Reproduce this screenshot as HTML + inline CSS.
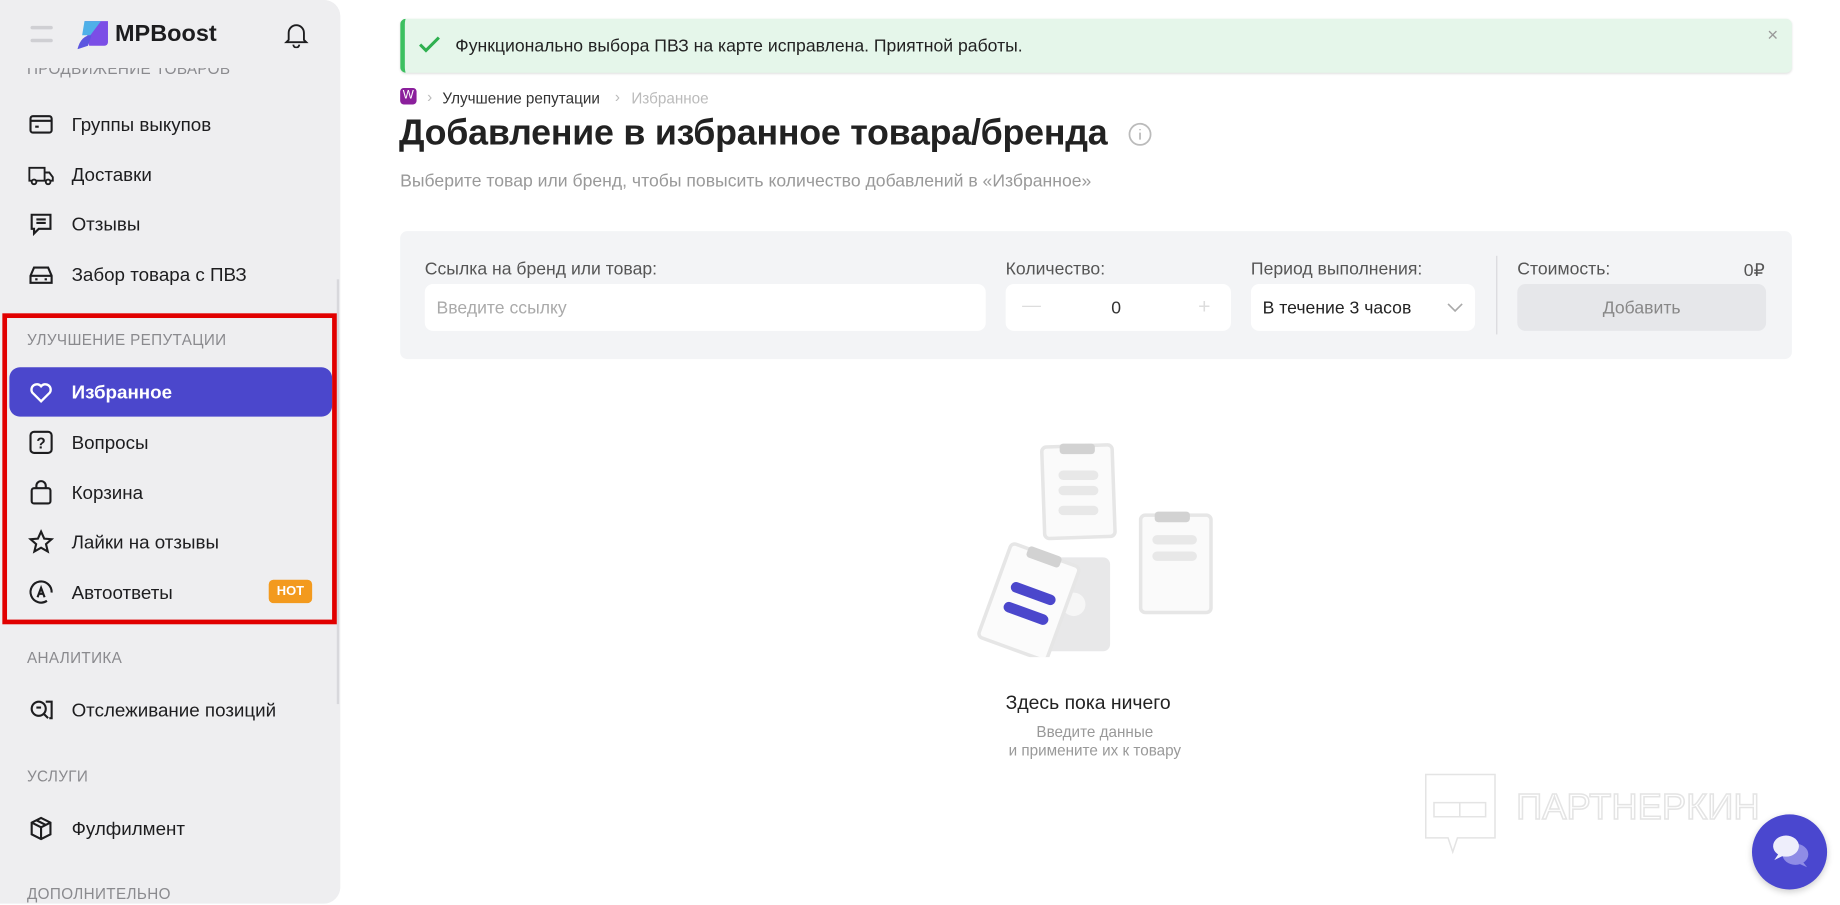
<!DOCTYPE html>
<html><head><meta charset="utf-8"><style>
*{box-sizing:border-box;margin:0;padding:0}
html,body{width:1840px;height:905px;overflow:hidden;background:#fff;font-family:"Liberation Sans","Noto Sans CJK SC",sans-serif;color:#1d1d1f}
#w{position:absolute;left:0;top:0;width:1568px;height:771px;transform:scale(1.17347);transform-origin:0 0}
.a{position:absolute;white-space:nowrap}
.side{position:absolute;left:0;top:0;width:290px;height:770px;background:#eeeef0;border-radius:0 14px 14px 0;overflow:hidden}
.sec{position:absolute;left:23px;font-size:13px;color:#8a8a8e;letter-spacing:.3px}
.it{position:absolute;left:61px;font-size:16px;color:#1d1d1f;transform:translateY(-42%)}
.ic{position:absolute;left:24px;width:22px;height:22px;transform:translateY(-50%)}
.lbl{position:absolute;font-size:15px;color:#555;top:221px}
.inp{position:absolute;top:242px;height:40px;background:#fff;border-radius:7px}
</style></head><body><div id="w">
<div class="side">
 <div class="sec" style="top:51px">ПРОДВИЖЕНИЕ ТОВАРОВ</div>
 <div class="a" style="left:0;top:0;width:290px;height:58px;background:#eeeef0"></div>
 <div class="a" style="left:26px;top:22px;width:19px;height:3px;background:#cfcfd3;border-radius:2px"></div>
 <div class="a" style="left:26px;top:33px;width:19px;height:3px;background:#cfcfd3;border-radius:2px"></div>
 <svg class="a" style="left:66px;top:16px" width="27" height="26" viewBox="0 0 27 26"><path d="M6 2h20v18a3 3 0 0 1-3 3H10z" fill="#7b4ee6"/><path d="M6 2h14L11 14H4z" fill="#4fb0e8"/><path d="M0 26c2-8 6-12 12-12l-3 9z" fill="#5c56e0"/></svg>
 <div class="a" style="left:98px;top:18px;font-size:20px;font-weight:bold">MPBoost</div>
 <svg class="a" style="left:242px;top:19px" width="21" height="22" viewBox="0 0 21 22" fill="none" stroke="#1d1d1f" stroke-width="1.6"><path d="M4 15V9a6.5 6.5 0 0 1 13 0v6l2 2H2z"/><path d="M8 19a2.5 2.5 0 0 0 5 0"/></svg>
 <svg class="ic" style="top:106px" viewBox="0 0 22 22" fill="none" stroke="#1d1d1f" stroke-width="1.8"><rect x="2" y="4" width="18" height="14" rx="2"/><path d="M2 8h18M6 13h3"/></svg><div class="it" style="top:106px">Группы выкупов</div>
 <svg class="ic" style="top:149px" viewBox="0 0 22 22" fill="none" stroke="#1d1d1f" stroke-width="1.6"><path d="M1 5h13v11H1zM14 9h4l3 4v3h-7"/><circle cx="5" cy="17" r="2" fill="#eee"/><circle cx="17" cy="17" r="2" fill="#eee"/></svg><div class="it" style="top:149px">Доставки</div>
 <svg class="ic" style="top:191px" viewBox="0 0 22 22" fill="none" stroke="#1d1d1f" stroke-width="1.8"><path d="M3 3h16v12H9l-4 4v-4H3z"/><path d="M7 7h8M7 10h8"/></svg><div class="it" style="top:191px">Отзывы</div>
 <svg class="ic" style="top:234px" viewBox="0 0 22 22" fill="none" stroke="#1d1d1f" stroke-width="1.8"><path d="M2 12l3-7h12l3 7v6H2z"/><path d="M2 12h18M6 15h2M14 15h2"/></svg><div class="it" style="top:234px">Забор товара с ПВЗ</div>
 <div class="a" style="left:287px;top:238px;width:2px;height:362px;background:#d8d8dc"></div>
 <div class="a" style="left:2px;top:267px;width:285px;height:265px;border:4px solid #e10000"></div>
 <div class="sec" style="top:282px">УЛУЧШЕНИЕ РЕПУТАЦИИ</div>
 <div class="a" style="left:8px;top:313px;width:275px;height:42px;background:#4b47cc;border-radius:9px"></div>
 <svg class="ic" style="top:334px" viewBox="0 0 22 22" fill="none" stroke="#fff" stroke-width="2"><path d="M11 19l-7.5-7.5a4.6 4.6 0 0 1 7.5-5.3 4.6 4.6 0 0 1 7.5 5.3z"/></svg><div class="it" style="top:334px;color:#fff;font-weight:bold">Избранное</div>
 <svg class="ic" style="top:377px" viewBox="0 0 22 22" fill="none" stroke="#1d1d1f" stroke-width="1.8"><rect x="2" y="2" width="18" height="18" rx="3"/><text x="11" y="16" font-size="13" font-weight="bold" text-anchor="middle" fill="#1d1d1f" stroke="none" font-family="Liberation Sans">?</text></svg><div class="it" style="top:377px">Вопросы</div>
 <svg class="ic" style="top:420px" viewBox="0 0 22 22" fill="none" stroke="#1d1d1f" stroke-width="1.8"><rect x="3" y="7" width="16" height="13" rx="2"/><path d="M7 7V5a4 4 0 0 1 8 0v2"/></svg><div class="it" style="top:420px">Корзина</div>
 <svg class="ic" style="top:462px" viewBox="0 0 22 22" fill="none" stroke="#1d1d1f" stroke-width="1.8"><path d="M11 2l2.7 6 6.3.5-4.8 4.2 1.5 6.3L11 15.7 5.3 19l1.5-6.3L2 8.5 8.3 8z"/></svg><div class="it" style="top:462px">Лайки на отзывы</div>
 <svg class="ic" style="top:505px" viewBox="0 0 22 22" fill="none" stroke="#1d1d1f" stroke-width="1.8"><path d="M16 18A9 9 0 1 1 20 11"/><path d="M8 15l3-8 3 8M9 12h4"/></svg><div class="it" style="top:505px">Автоответы</div>
 <div class="a" style="left:229px;top:494px;width:37px;height:20px;background:#f39a1e;border-radius:4px;color:#fff;font-size:11px;font-weight:bold;text-align:center;line-height:20px">HOT</div>
 <div class="sec" style="top:553px">АНАЛИТИКА</div>
 <svg class="ic" style="top:605px" viewBox="0 0 22 22" fill="none" stroke="#1d1d1f" stroke-width="1.8"><circle cx="9" cy="10" r="6"/><path d="M13 14l4 4M7 9h4M15 4h5v14h-2"/></svg><div class="it" style="top:605px">Отслеживание позиций</div>
 <div class="sec" style="top:654px">УСЛУГИ</div>
 <svg class="ic" style="top:706px" viewBox="0 0 22 22" fill="none" stroke="#1d1d1f" stroke-width="1.8"><path d="M11 2l8 4v10l-8 4-8-4V6zM3 6l8 4 8-4M11 10v10M7 4l8 4"/></svg><div class="it" style="top:706px">Фулфилмент</div>
 <div class="sec" style="top:754px">ДОПОЛНИТЕЛЬНО</div>
</div>

<div class="a" style="left:341px;top:16px;width:1186px;height:46px;background:#e5f6ea;border-left:4px solid #3cc060;border-radius:5px;box-shadow:0 1px 2px rgba(0,0,0,.12)"></div>
<svg class="a" style="left:357px;top:30px" width="18" height="16" viewBox="0 0 18 16" fill="none" stroke="#2fb050" stroke-width="2.6"><path d="M1 8l5 5L17 2"/></svg>
<div class="a" style="left:388px;top:31px;font-size:15px;color:#222">Функционально выбора ПВЗ на карте исправлена. Приятной работы.</div>
<div class="a" style="left:1506px;top:22px;font-size:16px;color:#999">×</div>

<div class="a" style="left:341px;top:75px;width:14px;height:14px;background:#8b1f9c;border-radius:3px;color:#fff;font-size:10px;text-align:center;line-height:14px">W</div>
<div class="a" style="left:364px;top:75px;font-size:13px;color:#bbb">›</div>
<div class="a" style="left:377px;top:76px;font-size:13px;color:#333">Улучшение репутации</div>
<div class="a" style="left:524px;top:75px;font-size:13px;color:#bbb">›</div>
<div class="a" style="left:538px;top:76px;font-size:13px;color:#bbb">Избранное</div>
<div class="a" style="left:340px;top:96px;font-size:30.5px;font-weight:bold;color:#222;letter-spacing:-.2px">Добавление в избранное товара/бренда</div>
<svg class="a" style="left:961px;top:104px" width="21" height="21" viewBox="0 0 21 21" fill="none" stroke="#bbb" stroke-width="1.5"><circle cx="10.5" cy="10.5" r="9"/><path d="M10.5 9v6M10.5 6v1"/></svg>
<div class="a" style="left:341px;top:146px;font-size:15px;color:#999">Выберите товар или бренд, чтобы повысить количество добавлений в «Избранное»</div>

<div class="a" style="left:341px;top:197px;width:1186px;height:109px;background:#f3f4f6;border-radius:6px"></div>
<div class="lbl" style="left:362px">Ссылка на бренд или товар:</div>
<div class="lbl" style="left:857px">Количество:</div>
<div class="lbl" style="left:1066px">Период выполнения:</div>
<div class="lbl" style="left:1293px">Стоимость:</div>
<div class="lbl" style="left:1486px">0₽</div>
<div class="inp" style="left:362px;width:478px"><span class="a" style="left:10px;top:12px;font-size:15px;color:#aaa">Введите ссылку</span></div>
<div class="inp" style="left:857px;width:192px"><span class="a" style="left:14px;top:10px;font-size:16px;color:#ddd">—</span><span class="a" style="left:90px;top:12px;font-size:15px;color:#333">0</span><span class="a" style="left:164px;top:9px;font-size:18px;color:#ddd">+</span></div>
<div class="inp" style="left:1066px;width:191px"><span class="a" style="left:10px;top:12px;font-size:15px;color:#222">В течение 3 часов</span><svg class="a" style="left:167px;top:16px" width="14" height="9" viewBox="0 0 14 9" fill="none" stroke="#aaa" stroke-width="1.4"><path d="M1 1l6 6 6-6"/></svg></div>
<div class="a" style="left:1275px;top:218px;width:1px;height:67px;background:#d8d8dc"></div>
<div class="a" style="left:1293px;top:242px;width:212px;height:40px;background:#e6e7ea;border-radius:7px;text-align:center;line-height:42px;font-size:15px;color:#888">Добавить</div>

<svg class="a" style="left:830px;top:375px" width="210" height="185" viewBox="0 0 210 185">
 <rect x="59" y="5" width="60" height="78" rx="4" fill="#fafafa" stroke="#e6e6e6" stroke-width="3" transform="rotate(-2 89 44)"/>
 <rect x="73" y="3" width="30" height="9" rx="3" fill="#d2d2d2"/>
 <rect x="72" y="26" width="34" height="8" rx="4" fill="#e8e8e8"/><rect x="72" y="39" width="34" height="8" rx="4" fill="#e8e8e8"/><rect x="72" y="56" width="34" height="8" rx="4" fill="#e8e8e8"/>
 <rect x="142" y="64" width="60" height="83" rx="4" fill="#fafafa" stroke="#e6e6e6" stroke-width="3"/>
 <rect x="154" y="61" width="30" height="9" rx="3" fill="#d2d2d2"/>
 <rect x="152" y="81" width="38" height="8" rx="4" fill="#e8e8e8"/><rect x="152" y="95" width="38" height="8" rx="4" fill="#e8e8e8"/>
 <rect x="50" y="100" width="66" height="80" rx="6" fill="#e8e8e9"/>
 <circle cx="85" cy="140" r="10" fill="#f6f6f6"/>
 <g transform="rotate(20 45 140)"><rect x="15" y="95" width="62" height="85" rx="4" fill="#fbfbfb" stroke="#e6e6e6" stroke-width="3"/><rect x="30" y="92" width="30" height="10" rx="3" fill="#d2d2d2"/>
 <rect x="27" y="125" width="40" height="9" rx="4.5" fill="#4b47cc"/><rect x="27" y="143" width="40" height="9" rx="4.5" fill="#4b47cc"/></g>
</svg>
<div class="a" style="left:857px;top:590px;font-size:16.5px;color:#222">Здесь пока ничего</div>
<div class="a" style="left:853px;top:616px;width:160px;text-align:center;font-size:13px;color:#999;line-height:16px">Введите данные<br>и применит﻿е их к товару</div>

<svg class="a" style="left:1214px;top:658px" width="314" height="70" viewBox="0 0 314 70" fill="none" stroke="#e4e4e4" stroke-width="1.3"><path d="M1 2h59v54H28l-4 12-4-12H1z"/><path d="M8 26h44v12H8zM30 26v12"/><text x="78" y="40" font-size="31" font-family="Liberation Sans" fill="#fff" stroke="#e4e4e4">ПАРТНЕРКИН</text></svg>
<div class="a" style="left:1493px;top:694px;width:64px;height:64px;border-radius:50%;background:#4a47cf;box-shadow:0 2px 6px rgba(0,0,0,.2)"></div>
<svg class="a" style="left:1508px;top:708px" width="36" height="34" viewBox="0 0 36 34"><ellipse cx="22" cy="20" rx="11" ry="9" fill="#8f8ce6"/><path d="M28 26l4 5-7-3z" fill="#8f8ce6"/><ellipse cx="14" cy="13" rx="11" ry="9" fill="#eeeefb"/><path d="M8 19l-4 6 8-4z" fill="#eeeefb"/></svg>
</div></body></html>
